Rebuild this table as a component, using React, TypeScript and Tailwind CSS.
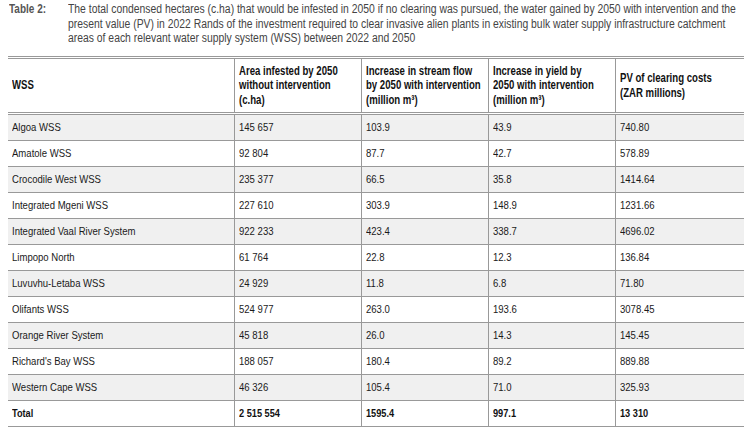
import React from 'react';

type Row = [string, string, string, string, string];

const ROWS: Row[] = [
  ['Algoa WSS', '145 657', '103.9', '43.9', '740.80'],
  ['Amatole WSS', '92 804', '87.7', '42.7', '578.89'],
  ['Crocodile West WSS', '235 377', '66.5', '35.8', '1414.64'],
  ['Integrated Mgeni WSS', '227 610', '303.9', '148.9', '1231.66'],
  ['Integrated Vaal River System', '922 233', '423.4', '338.7', '4696.02'],
  ['Limpopo North', '61 764', '22.8', '12.3', '136.84'],
  ['Luvuvhu-Letaba WSS', '24 929', '11.8', '6.8', '71.80'],
  ['Olifants WSS', '524 977', '263.0', '193.6', '3078.45'],
  ['Orange River System', '45 818', '26.0', '14.3', '145.45'],
  ["Richard's Bay WSS", '188 057', '180.4', '89.2', '889.88'],
  ['Western Cape WSS', '46 326', '105.4', '71.0', '325.93'],
];

const TOTAL: Row = ['Total', '2 515 554', '1595.4', '997.1', '13 310'];

const HEADERS: string[][] = [
  ['WSS'],
  ['Area infested by 2050', 'without intervention', '(c.ha)'],
  ['Increase in stream flow', 'by 2050 with intervention', '(million m³)'],
  ['Increase in yield by', '2050 with intervention', '(million m³)'],
  ['PV of clearing costs', '(ZAR millions)'],
];

const GRID = 'grid grid-cols-[227px_127px_127px_127px_128px]';

const cellBorder = (i: number) => (i < 4 ? 'border-r border-[#999]' : '');

// Liberation Sans squeezed sideways, standing in for a condensed face
const Narrow: React.FC<{ bold?: boolean; children: React.ReactNode }> = ({ bold, children }) => (
  <div className={`origin-left whitespace-nowrap ${bold ? 'scale-x-[0.8]' : 'scale-x-[0.83]'}`}>{children}</div>
);

const App: React.FC = () => {
  return (
    <div className="w-[754px] h-[432px] bg-white text-[#1a1a1a] overflow-hidden font-['Liberation_Sans',Arial,sans-serif]">
      {/* Caption */}
      <div className="flex h-[56px] pt-[2px] pl-[9px] text-[12.5px] leading-[14.5px]">
        <div className="w-[59px] shrink-0 font-bold text-[#555]">
          <Narrow bold>Table 2:</Narrow>
        </div>
        <div className="text-[#444]">
          <Narrow>
            The total condensed hectares (c.ha) that would be infested in 2050 if no clearing was pursued, the water gained by 2050 with intervention and the
            <br />
            present value (PV) in 2022 Rands of the investment required to clear invasive alien plants in existing bulk water supply infrastructure catchment
            <br />
            areas of each relevant water supply system (WSS) between 2022 and 2050
          </Narrow>
        </div>
      </div>

      {/* Table */}
      <div className="ml-[8px] w-[736px] border-t-[3px] border-double border-[#999]">
        {/* Header */}
        <div className={`${GRID} h-[56px] border-b-[3px] border-double border-[#999] text-[12px] leading-[14.5px] font-bold text-[#111]`}>
          {HEADERS.map((lines, i) => (
            <div key={i} className={`${cellBorder(i)} flex items-center pl-[4px]`}>
              <Narrow bold>
                {lines.map((l, j) => (
                  <div key={j}>{l}</div>
                ))}
              </Narrow>
            </div>
          ))}
        </div>

        {/* Body */}
        {ROWS.map((row, r) => (
          <div
            key={row[0]}
            className={`${GRID} h-[26px] border-b border-[#999] text-[11.5px] ${r % 2 === 0 ? 'bg-[#f0f0f0]' : 'bg-white'}`}
          >
            {row.map((cell, i) => (
              <div key={i} className={`${cellBorder(i)} flex items-center pl-[4px]`}>
                <Narrow>{cell}</Narrow>
              </div>
            ))}
          </div>
        ))}

        <div className={`${GRID} h-[26px] border-b border-[#999] text-[11.5px] font-bold bg-white text-[#111]`}>
          {TOTAL.map((cell, i) => (
            <div key={i} className={`${cellBorder(i)} flex items-center pl-[4px]`}>
              <Narrow bold>{cell}</Narrow>
            </div>
          ))}
        </div>
      </div>
    </div>
  );
};

export default App;
